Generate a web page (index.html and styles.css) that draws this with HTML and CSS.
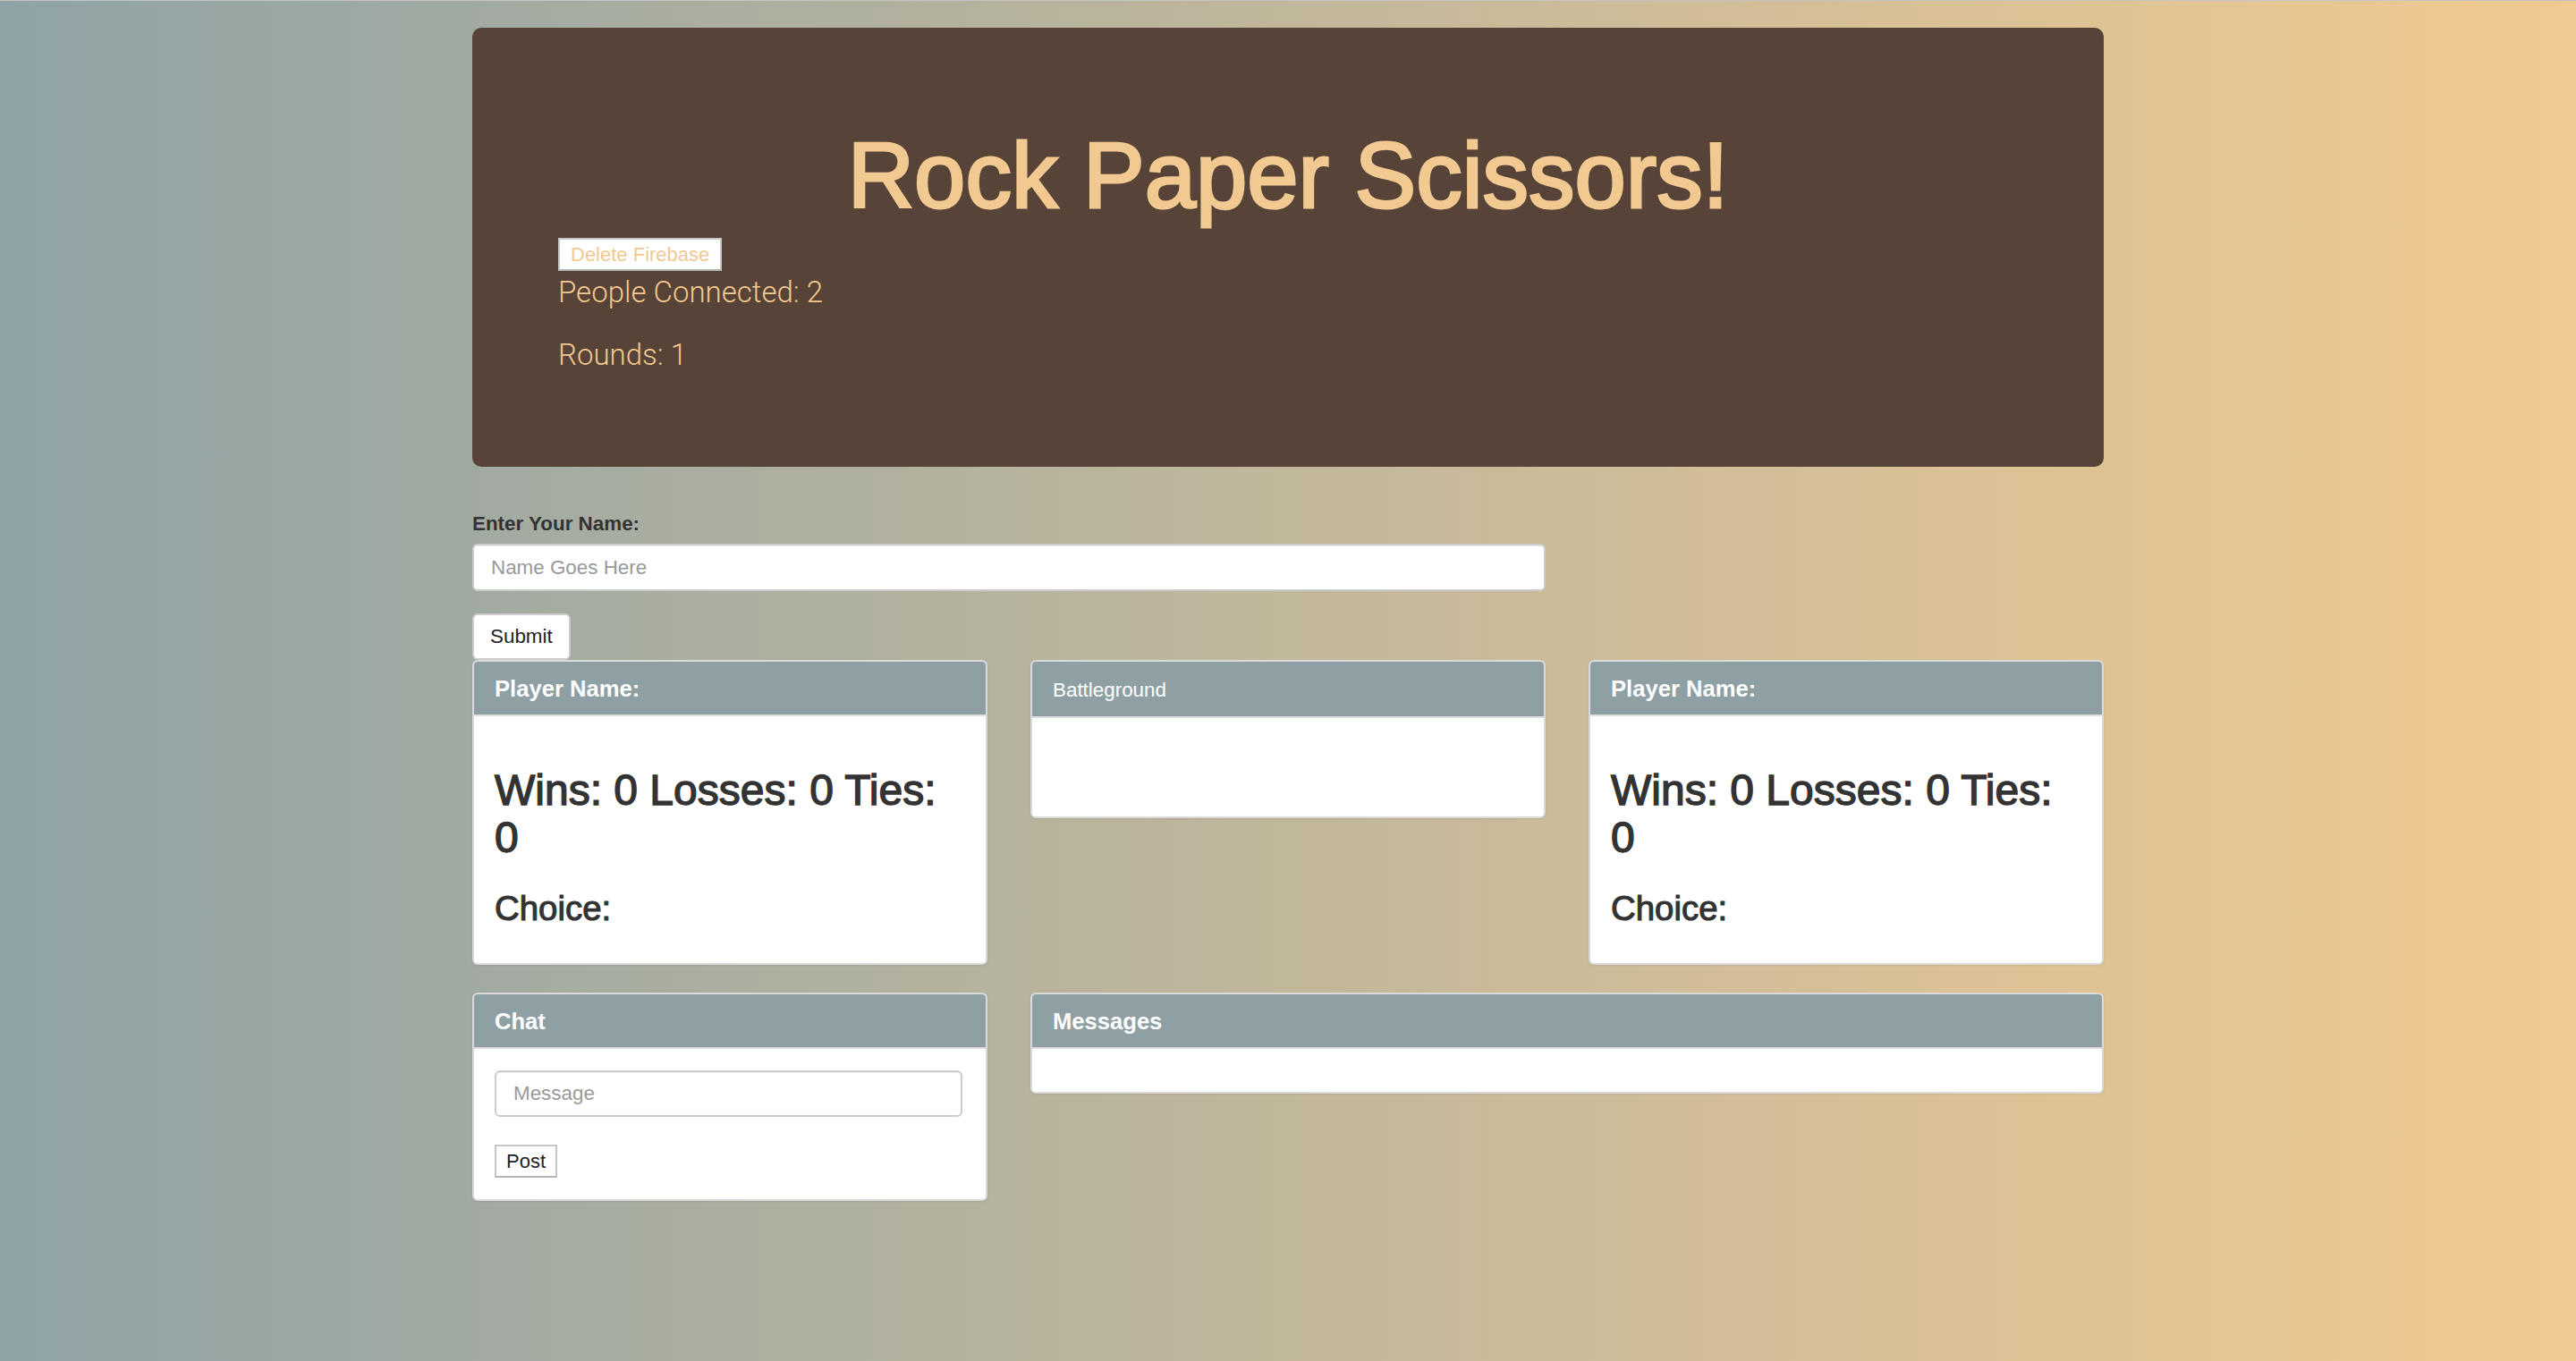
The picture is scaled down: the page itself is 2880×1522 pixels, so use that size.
FILE: index.html
```html
<!DOCTYPE html>
<html lang="en">
<head>
<meta charset="utf-8">
<title>Rock Paper Scissors!</title>
<link rel="stylesheet" href="styles.css">
</head>
<body>
<div class="container">
  <div class="jumbotron">
    <h1 class="title">Rock Paper Scissors!</h1>
    <button class="btn-plain btn-delete" type="button">Delete Firebase</button>
    <p class="stat">People Connected: 2</p>
    <p class="stat">Rounds: 1</p>
  </div>

  <form class="name-form">
    <div class="form-group">
      <label class="form-label" for="name">Enter Your Name:</label>
      <input class="form-control" id="name" type="text" placeholder="Name Goes Here">
    </div>
    <button class="btn-default" type="button">Submit</button>
  </form>

  <div class="row row-three">
    <div class="panel">
      <div class="panel-heading"><h3 class="panel-title">Player Name:</h3></div>
      <div class="panel-body">
        <h2 class="score">Wins: 0 Losses: 0 Ties: 0</h2>
        <h3 class="choice">Choice:</h3>
      </div>
    </div>
    <div class="panel">
      <div class="panel-heading plain">Battleground</div>
      <div class="panel-body battle-body"></div>
    </div>
    <div class="panel">
      <div class="panel-heading"><h3 class="panel-title">Player Name:</h3></div>
      <div class="panel-body">
        <h2 class="score">Wins: 0 Losses: 0 Ties: 0</h2>
        <h3 class="choice">Choice:</h3>
      </div>
    </div>
  </div>

  <div class="row row-two">
    <div class="panel">
      <div class="panel-heading"><h3 class="panel-title">Chat</h3></div>
      <div class="panel-body">
        <input class="form-control chat-input" type="text" placeholder="Message">
        <button class="btn-plain btn-post" type="button">Post</button>
      </div>
    </div>
    <div class="panel">
      <div class="panel-heading"><h3 class="panel-title">Messages</h3></div>
      <div class="panel-body messages-body"></div>
    </div>
  </div>
</div>
</body>
</html>
```

FILE: styles.css
```css
* {
  box-sizing: border-box;
}

html {
  min-height: 100%;
}

body {
  margin: 0;
  min-height: 1522px;
  border-top: 1px solid #c4c4c4;
  background: linear-gradient(to right, #8fa3a6 0%, #c1b79b 50%, #f1ca91 100%);
  font-family: "Liberation Sans", Arial, Helvetica, sans-serif;
  font-size: 22.4px;
  line-height: 32px;
  color: #333333;
}

.container {
  width: 1824px;
  margin: 0 auto;
  padding-top: 30px;
}

/* Jumbotron */
.jumbotron {
  background: #574337;
  border-radius: 10px;
  padding: 77px 96px 79px;
  margin-bottom: 48px;
  color: #f1c991;
}

.title {
  margin: 32px 0 13px;
  font-size: 103px;
  line-height: 113px;
  font-weight: 400;
  text-align: center;
  color: #f1c991;
  -webkit-text-stroke: 3px #f1c991;
}

.btn-plain {
  display: block;
  height: 37px;
  padding: 0 12px;
  background: #ffffff;
  border: 2px solid #c6c6c6;
  border-bottom-color: #b4b4b4;
  border-radius: 0;
  font-family: "Liberation Sans", Arial, sans-serif;
  font-size: 22px;
  line-height: 33px;
}

.btn-delete {
  color: #f1c991;
}

.stat {
  margin: 0 0 22px;
  font-family: Roboto, "Liberation Sans", sans-serif;
  font-weight: 300;
  font-size: 33px;
  line-height: 48px;
  color: #f1c991;
}

/* Name form */
.name-form {
  width: 1200px;
  margin: 0;
}

.form-group {
  margin-bottom: 25px;
}

.form-label {
  display: inline-block;
  margin-bottom: 6px;
  font-weight: 700;
  font-size: 22.4px;
  line-height: 32px;
  color: #333333;
}

.form-control {
  display: block;
  width: 100%;
  height: 53px;
  padding: 0 19px;
  background: #ffffff;
  border: 2px solid #cccccc;
  border-radius: 6px;
  box-shadow: inset 0 1px 1px rgba(0, 0, 0, 0.075);
  font-family: "Liberation Sans", Arial, sans-serif;
  font-size: 22.4px;
  color: #555555;
}

.form-control::placeholder {
  color: #999999;
}

.btn-default {
  display: block;
  height: 52px;
  margin-bottom: 0;
  padding: 0 18px;
  background: #ffffff;
  border: 2px solid #cccccc;
  border-radius: 6px;
  font-family: "Liberation Sans", Arial, sans-serif;
  font-size: 22.4px;
  color: #222222;
}

/* Panels */
.row {
  display: grid;
  column-gap: 48px;
  align-items: start;
}

.row-three {
  grid-template-columns: 576px 576px 576px;
}

.row-two {
  grid-template-columns: 576px 1200px;
}

.panel {
  background: #ffffff;
  border: 2px solid #dadada;
  border-radius: 6px;
  box-shadow: 0 1px 2px rgba(0, 0, 0, 0.08);
  margin-bottom: 31px;
  overflow: hidden;
}

.panel-heading {
  height: 61px;
  padding: 0 23px;
  display: flex;
  align-items: center;
  background: #8ea0a3;
  border-bottom: 2px solid #dddddd;
  color: #ffffff;
}

.panel-heading.plain {
  height: 63px;
  padding-top: 2px;
  font-size: 22.4px;
}

.panel-title {
  margin: 0;
  font-size: 25.6px;
  line-height: 28px;
  font-weight: 700;
  color: #ffffff;
}

.panel-body {
  padding: 24px 23px;
}

.score {
  margin: 32px 0 16px;
  font-size: 48px;
  line-height: 53px;
  font-weight: 400;
  color: #333333;
  -webkit-text-stroke: 1.4px #333333;
}

.choice {
  margin: 32px 0 16px;
  font-size: 38.4px;
  line-height: 42px;
  font-weight: 400;
  color: #333333;
  -webkit-text-stroke: 1.1px #333333;
}

.battle-body {
  height: 110px;
}

.messages-body {
  height: 47px;
}

.chat-input {
  width: 523px;
  height: 52px;
  margin-bottom: 31px;
}

.btn-post {
  width: 70px;
  padding: 0;
  color: #222222;
}
```
